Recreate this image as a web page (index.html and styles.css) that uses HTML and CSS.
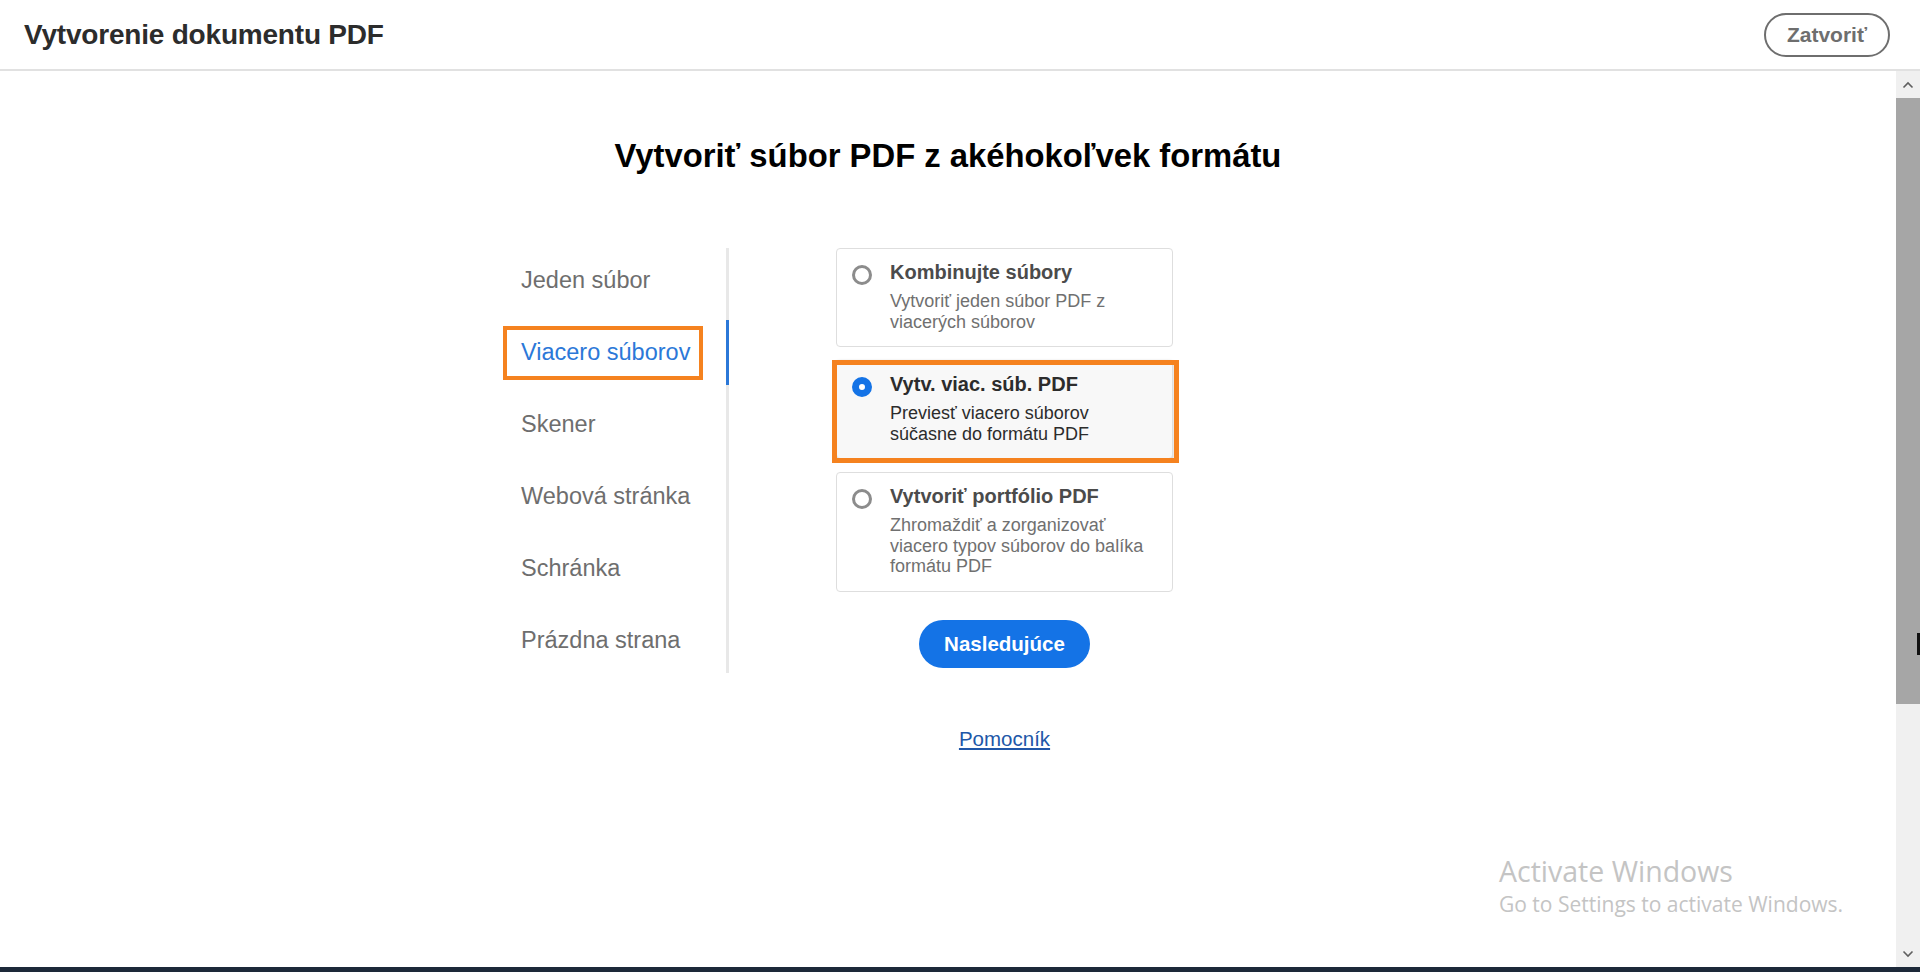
FILE: index.html
```html
<!DOCTYPE html>
<html>
<head>
    <title>Vytvorenie dokumentu PDF</title>
    <link rel="stylesheet" href="styles.css">
</head>
<body>
    <header class="topbar">
        <h1 class="topbar-title">Vytvorenie dokumentu PDF</h1>
        <button class="btn-close">Zatvoriť</button>
    </header>
    <div class="main">
        <div class="content">
            <h2 class="heading">Vytvoriť súbor PDF z akéhokoľvek formátu</h2>
            <div class="layout">
                <div class="nav">
                    <div class="nav-item">Jeden súbor</div>
                    <div class="nav-item active marked">Viacero súborov</div>
                    <div class="nav-item">Skener</div>
                    <div class="nav-item">Webová stránka</div>
                    <div class="nav-item">Schránka</div>
                    <div class="nav-item">Prázdna strana</div>
                </div>
                <div class="panel">
                    <div class="card">
                        <span class="radio"></span>
                        <div class="card-text">
                            <div class="card-title">Kombinujte súbory</div>
                            <div class="card-desc">Vytvoriť jeden súbor PDF z viacerých súborov</div>
                        </div>
                    </div>
                    <div class="card selected marked">
                        <span class="radio"></span>
                        <div class="card-text">
                            <div class="card-title">Vytv. viac. súb. PDF</div>
                            <div class="card-desc">Previesť viacero súborov súčasne do formátu PDF</div>
                        </div>
                    </div>
                    <div class="card">
                        <span class="radio"></span>
                        <div class="card-text">
                            <div class="card-title">Vytvoriť portfólio PDF</div>
                            <div class="card-desc">Zhromaždiť a zorganizovať viacero typov súborov do balíka formátu PDF</div>
                        </div>
                    </div>
                    <button class="btn-next">Nasledujúce</button>
                    <a class="help" href="#">Pomocník</a>
                </div>
            </div>
        </div>
        <div class="scrollbar">
            <div class="sb-btn">
                <svg width="12" height="8" viewBox="0 0 12 8"><polyline points="1.5,6.5 6,2 10.5,6.5" fill="none" stroke="#5f5f5f" stroke-width="1.6"/></svg>
            </div>
            <div class="sb-track">
                <div class="sb-thumb"></div>
            </div>
            <div class="sb-btn">
                <svg width="12" height="8" viewBox="0 0 12 8"><polyline points="1.5,1.5 6,6 10.5,1.5" fill="none" stroke="#5f5f5f" stroke-width="1.6"/></svg>
            </div>
        </div>
    </div>
    <div class="taskbar"></div>
    <div class="cursor"></div>
    <div class="watermark">
        <div class="wm-title">Activate Windows</div>
        <div class="wm-sub">Go to Settings to activate Windows.</div>
    </div>
</body>
</html>
```

FILE: styles.css
```css
*, *::before, *::after {
    box-sizing: border-box;
}
body {
    margin: 0;
    height: 972px;
    overflow: hidden;
    display: flex;
    flex-direction: column;
    background-color: #fff;
    font-family: "Liberation Sans", Arial, sans-serif;
}
.topbar {
    height: 71px;
    flex-shrink: 0;
    display: flex;
    align-items: center;
    justify-content: space-between;
    padding: 0 30px 0 24px;
    border-bottom: 2px solid #e1e1e1;
}
.topbar-title {
    margin: 0;
    font-size: 28px;
    font-weight: bold;
    letter-spacing: -0.2px;
    color: #2c2c2c;
}
.btn-close {
    height: 44px;
    padding: 0 21px;
    border: 2px solid #6e6e6e;
    border-radius: 22px;
    background-color: #fff;
    color: #6e6e6e;
    font-family: "Liberation Sans", Arial, sans-serif;
    font-size: 21px;
    font-weight: bold;
}
.main {
    display: flex;
    height: 896px;
    flex-shrink: 0;
}
.content {
    flex: 1;
}
.heading {
    margin: 66px 0 0;
    text-align: center;
    font-size: 32.8px;
    line-height: 37px;
    font-weight: bold;
    color: #000;
}
.layout {
    display: flex;
    align-items: flex-start;
    width: 890px;
    margin: 74px auto 0;
}
.nav {
    width: 226px;
    border-right: 3px solid #e8e8e8;
}
.nav-item {
    position: relative;
    line-height: 65px;
    margin-bottom: 7px;
    padding-left: 18px;
    font-size: 23.5px;
    color: #6e6e6e;
}
.nav-item:last-child {
    margin-bottom: 0;
}
.nav-item.active {
    color: #2b78d8;
    border-right: 3px solid #2b78d8;
    margin-right: -3px;
}
.nav-item.marked::after {
    content: "";
    position: absolute;
    left: 0;
    top: 6px;
    width: 200px;
    height: 54px;
    border: 4px solid #f5821f;
}
.panel {
    width: 444px;
    padding-left: 107px;
    display: flex;
    flex-direction: column;
}
.card {
    position: relative;
    display: flex;
    align-items: flex-start;
    width: 337px;
    padding: 11px 22px 14px 15px;
    margin-bottom: 13px;
    border: 1px solid #dedede;
    border-radius: 4px;
    background-color: #fff;
}
.card.selected {
    background-color: #f8f8f8;
    box-shadow: 0 1px 3px rgba(0, 0, 0, 0.25);
}
.card.marked::after {
    content: "";
    position: absolute;
    top: -1px;
    left: -5px;
    right: -7px;
    bottom: -5px;
    border: 5px solid #f5821f;
}
.radio {
    flex-shrink: 0;
    width: 20px;
    height: 20px;
    margin-top: 5px;
    margin-right: 18px;
    border: 3px solid #8c8c8c;
    border-radius: 50%;
    background-color: #fff;
}
.card.selected .radio {
    border: 7px solid #1473e6;
}
.card-title {
    font-size: 20px;
    line-height: 24px;
    font-weight: bold;
    color: #4b4b4b;
}
.card-desc {
    margin-top: 7px;
    font-size: 18px;
    line-height: 20.5px;
    color: #707070;
}
.card.selected .card-title,
.card.selected .card-desc {
    color: #2c2c2c;
}
.btn-next {
    align-self: center;
    height: 48px;
    margin-top: 15px;
    padding: 0 25px;
    border: none;
    border-radius: 24px;
    background-color: #1473e6;
    color: #fff;
    font-family: "Liberation Sans", Arial, sans-serif;
    font-size: 20.5px;
    font-weight: bold;
}
.help {
    align-self: center;
    margin-top: 59px;
    font-size: 20.5px;
    line-height: 24px;
    color: #2157a8;
    text-decoration: underline;
}
.scrollbar {
    width: 24px;
    display: flex;
    flex-direction: column;
    background-color: #f0f0f0;
}
.sb-btn {
    height: 27px;
    display: flex;
    align-items: center;
    justify-content: center;
}
.sb-track {
    flex: 1;
}
.sb-thumb {
    height: 606px;
    background-color: #a6a6a6;
}
.taskbar {
    height: 5px;
    background-color: #1d2939;
}
.cursor {
    position: absolute;
    left: 1917px;
    top: 633px;
    width: 3px;
    height: 22px;
    background-color: #111;
}
.watermark {
    position: absolute;
    left: 1499px;
    top: 856px;
    font-family: "Open Sans", sans-serif;
    color: #c4c4c4;
}
.wm-title {
    font-size: 28.5px;
    line-height: 30px;
}
.wm-sub {
    margin-top: 6px;
    font-size: 21px;
    line-height: 24px;
}
```
